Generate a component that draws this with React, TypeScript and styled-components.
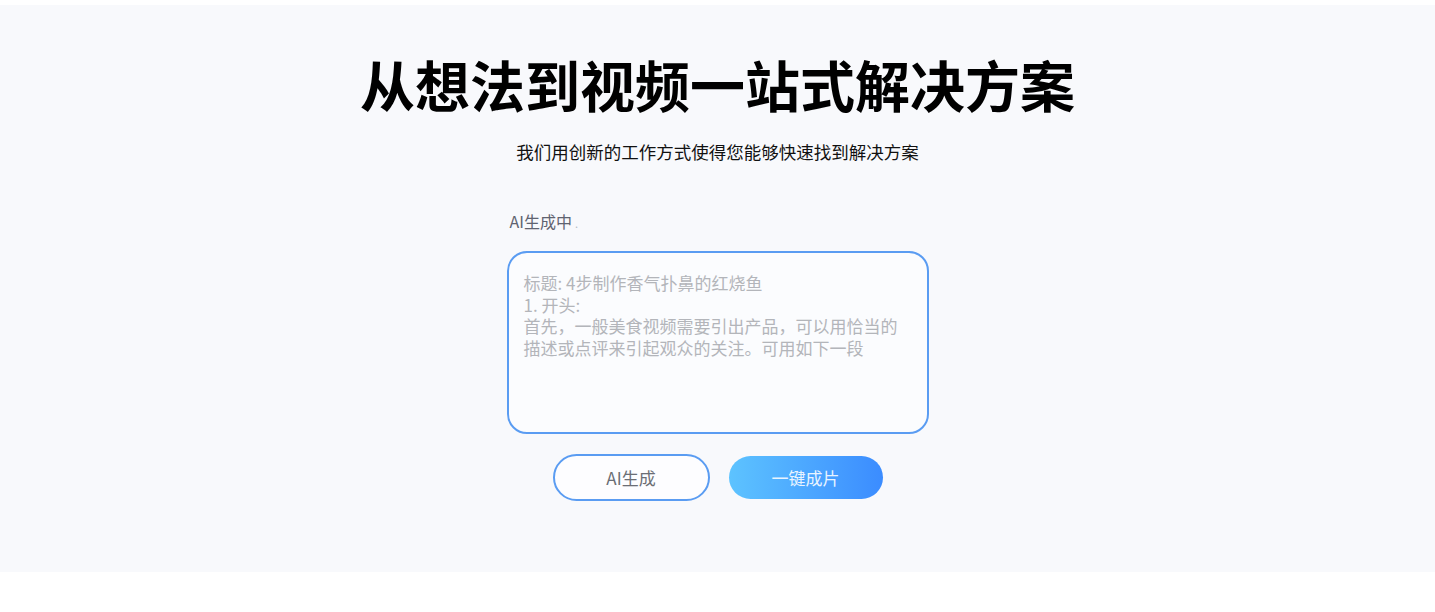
import React from "react";
import styled, { createGlobalStyle } from "styled-components";

const Global = createGlobalStyle`
  html, body { margin: 0; padding: 0; background: #ffffff; }
  body { font-family: "Noto Sans CJK SC", "Noto Sans", sans-serif; }
  * { box-sizing: border-box; }
`;

const Section = styled.section`
  margin-top: 5px;
  height: 567px;
  background: #f8f9fc;
  display: flex;
  flex-direction: column;
  align-items: center;
`;

const Title = styled.h1`
  margin: 40px 0 0;
  font-size: 55px;
  line-height: 76px;
  font-weight: 700;
  color: #000;
`;

const Subtitle = styled.p`
  margin: 18px 0 0;
  font-size: 17.5px;
  line-height: 26px;
  color: #111;
`;

const Form = styled.div`
  margin-top: 45px;
  width: 422px;
  display: flex;
  flex-direction: column;
`;

const Label = styled.div`
  padding-left: 3px;
  font-size: 16px;
  line-height: 22px;
  color: #5f6370;
  display: flex;
  align-items: baseline;
  gap: 3px;
`;

const Dot = styled.span`
  color: #b5bac4;
  font-size: 11px;
`;

const Box = styled.div`
  margin-top: 17px;
  height: 183px;
  border: 2px solid #5a9cf2;
  border-radius: 20px;
  background: #fbfcfe;
  padding: 19px 15px;
  font-size: 17px;
  line-height: 21.5px;
  color: #b3b5ba;
  white-space: pre-wrap;
`;

const Actions = styled.div`
  margin-top: 20px;
  display: flex;
  justify-content: center;
  align-items: center;
  gap: 19px;
`;

const OutlineButton = styled.button`
  width: 157px;
  height: 47px;
  border: 2px solid #5a9cf2;
  border-radius: 24px;
  background: #fdfdff;
  color: #6b6e75;
  font-family: inherit;
  font-size: 17px;
  cursor: pointer;
`;

const GradientButton = styled.button`
  width: 154px;
  height: 43px;
  border: none;
  border-radius: 22px;
  background: linear-gradient(90deg, #5dc3ff 0%, #3b8cff 100%);
  color: #e8f4ff;
  font-family: inherit;
  font-size: 17px;
  cursor: pointer;
`;

const content = `标题: 4步制作香气扑鼻的红烧鱼
1. 开头:
首先，一般美食视频需要引出产品，可以用恰当的
描述或点评来引起观众的关注。可用如下一段`;

export default function App() {
  return (
    <>
      <Global />
      <Section>
        <Title>从想法到视频一站式解决方案</Title>
        <Subtitle>我们用创新的工作方式使得您能够快速找到解决方案</Subtitle>
        <Form>
          <Label>
            AI生成中<Dot>.</Dot>
          </Label>
          <Box>{content}</Box>
          <Actions>
            <OutlineButton>AI生成</OutlineButton>
            <GradientButton>一键成片</GradientButton>
          </Actions>
        </Form>
      </Section>
    </>
  );
}
